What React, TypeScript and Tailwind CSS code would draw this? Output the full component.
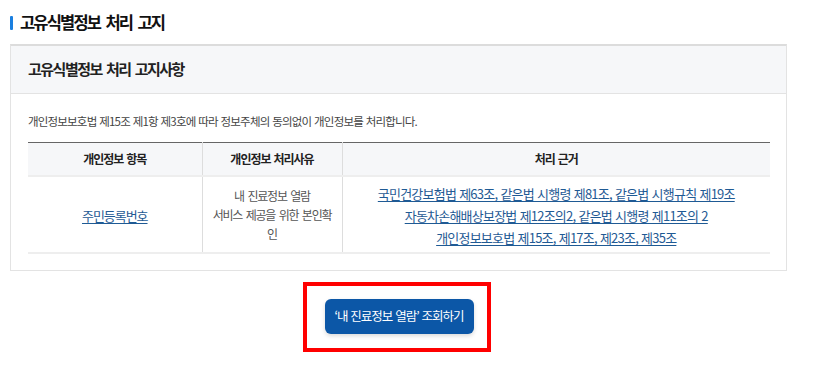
import React from 'react';

const font = { fontFamily: '"Noto Sans CJK KR", "Noto Sans", sans-serif' };

const basis = [
  '국민건강보험법 제63조, 같은법 시행령 제81조, 같은법 시행규칙 제19조',
  '자동차손해배상보장법 제12조의2, 같은법 시행령 제11조의 2',
  '개인정보보호법 제15조, 제17조, 제23조, 제35조',
];

const App: React.FC = () => {
  return (
    <div className="w-[813px] h-[366px] bg-white overflow-hidden" style={font}>
      {/* Title */}
      <div className="flex items-center h-[44px] pl-[10px]">
        <span className="w-[3px] h-[14px] bg-[#1a7fe0] rounded-[1px] mr-[7px] mt-[1px]"></span>
        <h2 className="text-[16.5px] font-bold text-[#111] tracking-[-0.11em] [word-spacing:0.2em] leading-none">고유식별정보 처리 고지</h2>
      </div>

      {/* Notice box */}
      <div className="ml-[10px] w-[777px] border border-[#e3e3e3] border-t-2 border-t-[#dcdcdc]">
        <div className="h-[48px] flex items-center px-[17px] bg-[#f6f7f9] border-b border-[#e3e3e3]">
          <h3 className="text-[15px] font-bold text-[#222] tracking-[-0.1em] [word-spacing:0.15em]">고유식별정보 처리 고지사항</h3>
        </div>
        <div className="px-[17px] pb-[16px]">
          <p className="pt-[19px] pb-[12px] text-[11.5px] text-[#444] tracking-[-0.07em] [word-spacing:1px] leading-[17px]">
            개인정보보호법 제15조 제1항 제3호에 따라 정보주체의 동의없이 개인정보를 처리합니다.
          </p>
          <table className="w-[742px] border-collapse table-fixed">
            <colgroup>
              <col className="w-[174px]" />
              <col className="w-[140px]" />
              <col />
            </colgroup>
            <thead>
              <tr className="bg-[#f6f7f9] border-t-[1.5px] border-t-[#666] border-b-2 border-b-[#eeeeee]">
                <th className="h-[33px] text-[12px] font-bold text-[#222] tracking-[-0.08em] [word-spacing:1px] border-r border-[#dddddd]">개인정보 항목</th>
                <th className="text-[12px] font-bold text-[#222] tracking-[-0.08em] [word-spacing:1px] border-r border-[#dddddd]">개인정보 처리사유</th>
                <th className="text-[12px] font-bold text-[#222] tracking-[-0.08em] [word-spacing:1px]">처리 근거</th>
              </tr>
            </thead>
            <tbody>
              <tr className="border-b-2 border-b-[#eeeeee]">
                <td className="h-[77px] text-center border-r border-[#dddddd]">
                  <a href="#" className="text-[13px] text-[#1f5a94] underline underline-offset-2 tracking-[-0.08em]">주민등록번호</a>
                </td>
                <td className="text-center text-[12px] text-[#555] leading-[19px] tracking-[-0.1em] [word-spacing:2px] border-r border-[#dddddd]">
                  내 진료정보 열람<br />서비스 제공을 위한 본인확<br />인
                </td>
                <td className="text-center leading-[21px] pt-[2px]">
                  {basis.map((line) => (
                    <div key={line}>
                      <a href="#" className="text-[13px] text-[#1f5a94] underline underline-offset-2 tracking-[-0.06em] [word-spacing:1px]">{line}</a>
                    </div>
                  ))}
                </td>
              </tr>
            </tbody>
          </table>
        </div>
      </div>

      {/* Action */}
      <div className="flex justify-center pt-[11px] pr-[20px]">
        <div className="border-4 border-[#ff0000] pl-[18px] pr-[13px] pt-[13px] pb-[14px]">
          <button className="w-[149px] h-[35px] rounded-[6px] bg-[#0c57a7] text-white text-[12.5px] tracking-[-0.08em] [word-spacing:1px] shadow-[0_2px_4px_rgba(0,0,0,0.15)]">
            ‘내 진료정보 열람’ 조회하기
          </button>
        </div>
      </div>
    </div>
  );
};

export default App;
